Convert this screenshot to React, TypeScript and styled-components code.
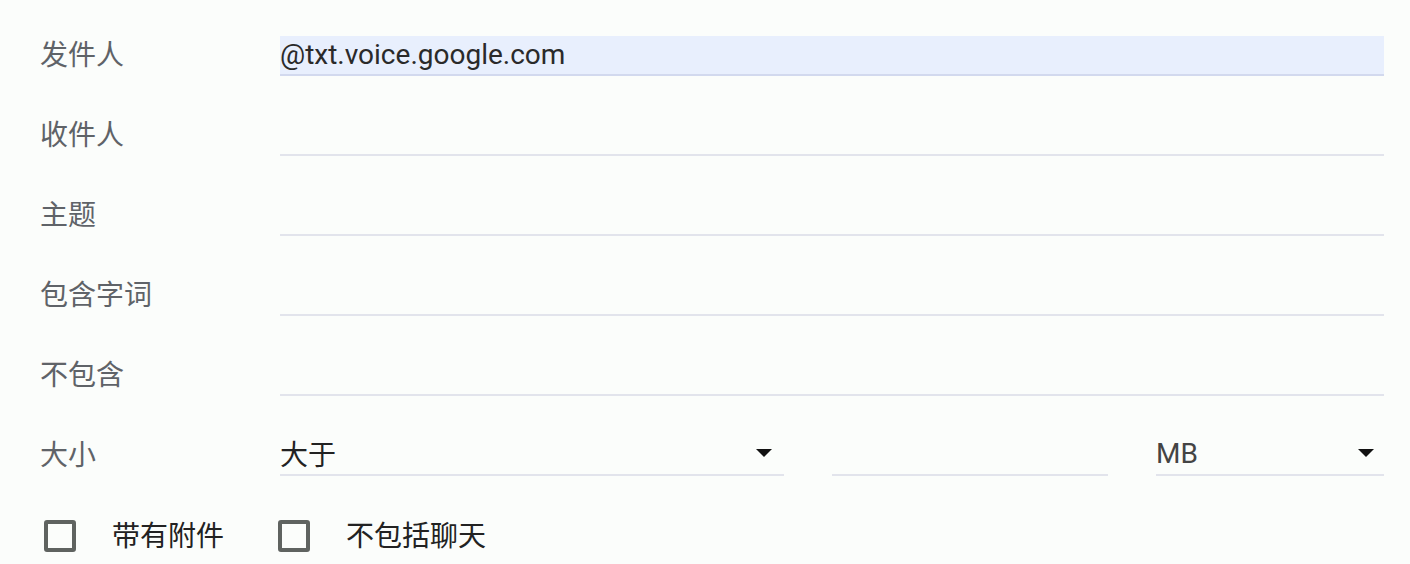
import React from "react";
import styled, { createGlobalStyle } from "styled-components";

const GlobalStyle = createGlobalStyle`
  html, body {
    margin: 0;
    padding: 0;
    background: #fbfdfb;
  }
  body {
    font-family: Roboto, "Noto Sans CJK SC", sans-serif;
  }
`;

const Panel = styled.div`
  width: 1410px;
  height: 564px;
  box-sizing: border-box;
  padding: 36px 26px 0 40px;
  background: #fbfdfb;
  display: flex;
  flex-direction: column;
  gap: 40px;
  overflow: hidden;
`;

const Row = styled.div`
  display: grid;
  grid-template-columns: 240px 1fr;
  align-items: center;
  height: 40px;
`;

const Label = styled.div`
  font-size: 28px;
  line-height: 40px;
  color: #5f6368;
  white-space: nowrap;
`;

const TextField = styled.input<{ $filled?: boolean }>`
  height: 40px;
  width: 100%;
  box-sizing: border-box;
  margin: 0;
  padding: 0 0 2px 0;
  border: none;
  border-bottom: 2px solid ${({ $filled }) => ($filled ? "#d2d9ee" : "#e2e4ec")};
  background: ${({ $filled }) => ($filled ? "#e8effd" : "transparent")};
  font-family: Roboto, "Noto Sans CJK SC", sans-serif;
  font-size: 28px;
  color: #2a2a2a;
  outline: none;
`;

const SizeFields = styled.div`
  display: grid;
  grid-template-columns: 504px 276px 228px;
  column-gap: 48px;
`;

const Select = styled.div<{ $muted?: boolean }>`
  height: 40px;
  box-sizing: border-box;
  border-bottom: 2px solid #e2e4ec;
  display: flex;
  align-items: center;
  justify-content: space-between;
  padding: 0 ${({ $muted }) => ($muted ? "10px" : "12px")} 4px 0;
  font-size: 28px;
  color: ${({ $muted }) => ($muted ? "#444" : "#222")};
`;

const Arrow = () => (
  <svg width="16" height="8" viewBox="0 0 16 8">
    <path d="M0 0h16L8 8z" fill="#111" />
  </svg>
);

const CheckRow = styled.div`
  display: flex;
  align-items: center;
  height: 32px;
  padding-left: 4px;
  margin-top: 4px;
`;

const Box = styled.span`
  width: 32px;
  height: 32px;
  box-sizing: border-box;
  border: 4px solid #5f6360;
  border-radius: 3px;
  margin-right: 36px;
  flex-shrink: 0;
`;

const CheckLabel = styled.span`
  font-size: 28px;
  color: #222;
  margin-right: 54px;
  padding-bottom: 4px;
  white-space: nowrap;
`;

const fields = ["收件人", "主题", "包含字词", "不包含"];

export default function App() {
  return (
    <>
      <GlobalStyle />
      <Panel>
        <Row>
          <Label>发件人</Label>
          <TextField $filled defaultValue="@txt.voice.google.com" />
        </Row>
        {fields.map((f) => (
          <Row key={f}>
            <Label>{f}</Label>
            <TextField />
          </Row>
        ))}
        <Row>
          <Label>大小</Label>
          <SizeFields>
            <Select>
              <span>大于</span>
              <Arrow />
            </Select>
            <TextField />
            <Select $muted>
              <span>MB</span>
              <Arrow />
            </Select>
          </SizeFields>
        </Row>
        <CheckRow>
          <Box />
          <CheckLabel>带有附件</CheckLabel>
          <Box />
          <CheckLabel>不包括聊天</CheckLabel>
        </CheckRow>
      </Panel>
    </>
  );
}
